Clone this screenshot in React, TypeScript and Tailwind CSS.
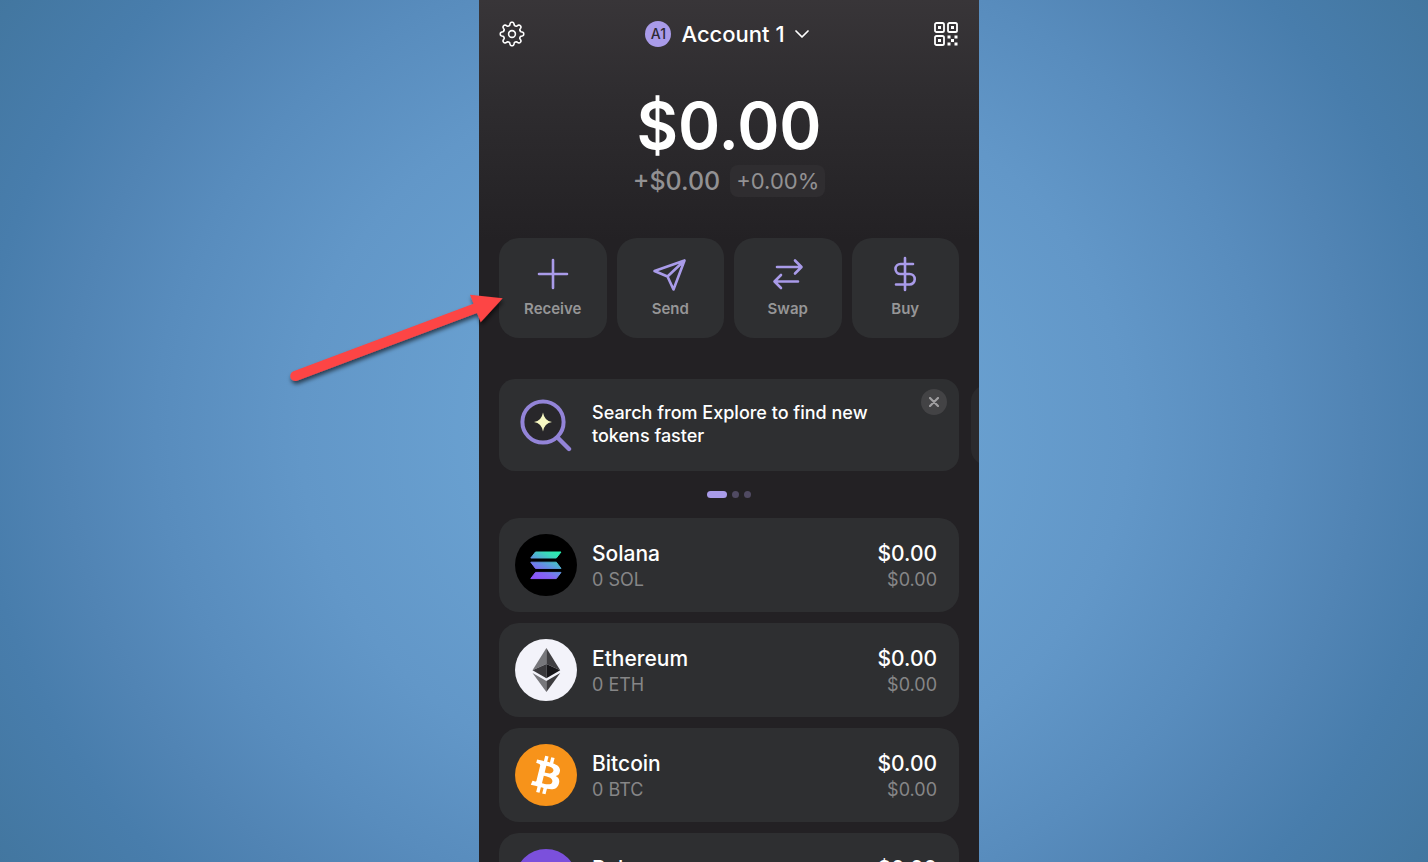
import { ReactNode } from "react";

interface Token {
  name: string;
  amount: string;
  value: string;
  change: string;
  logo: ReactNode;
}

interface Action {
  label: string;
  icon: ReactNode;
}

// Outline of the settings cog: eight rounded teeth around a circle
const getGearPath = (): string => {
  const points: string[] = [];
  for (let i = 0; i < 160; i++) {
    const angle = (i / 160) * Math.PI * 2;
    const radius = 10.2 + 1.6 * Math.tanh(1.8 * Math.cos(angle * 8));
    const x = 13 + radius * Math.sin(angle);
    const y = 13 - radius * Math.cos(angle);
    points.push(`${x.toFixed(2)} ${y.toFixed(2)}`);
  }
  return `M${points.join("L")}Z`;
};

const GearIcon = () => (
  <svg width="26" height="26" viewBox="0 0 26 26" fill="none" stroke="#fff" strokeWidth="1.6" strokeLinejoin="round">
    <path d={getGearPath()} />
    <circle cx="13" cy="13" r="3.4" />
  </svg>
);

const QrIcon = () => (
  <svg width="26" height="24" viewBox="-1 0 26 24" fill="none" stroke="#fff" strokeWidth="1.8">
    <rect x="1" y="1" width="9" height="9" rx="1.6" />
    <rect x="14" y="1" width="9" height="9" rx="1.6" />
    <rect x="1" y="14" width="9" height="9" rx="1.6" />
    <g fill="#fff" stroke="none">
      <rect x="4" y="4" width="3" height="3" />
      <rect x="17" y="4" width="3" height="3" />
      <rect x="4" y="17" width="3" height="3" />
      <rect x="13.5" y="13.5" width="3" height="3" />
      <rect x="20.5" y="13.5" width="3" height="3" />
      <rect x="17" y="17" width="3" height="3" />
      <rect x="13.5" y="20.5" width="3" height="3" />
      <rect x="20.5" y="20.5" width="3" height="3" />
    </g>
  </svg>
);

const ActionIcon = ({ children }: { children: ReactNode }) => (
  <svg
    width="36"
    height="36"
    viewBox="0 0 36 36"
    fill="none"
    stroke="#a99be9"
    strokeWidth="2.6"
    strokeLinecap="round"
    strokeLinejoin="round"
  >
    {children}
  </svg>
);

const SearchIcon = () => (
  <svg width="53" height="54" viewBox="0 0 53 54" fill="none">
    <circle cx="24" cy="23" r="20.6" fill="#28272a" stroke="#9384d8" strokeWidth="4" />
    <path d="M38.5 38.5L50 50" stroke="#9384d8" strokeWidth="4.4" strokeLinecap="round" />
    <path d="M24 13.5Q25.3 21.7 33 23Q25.3 24.3 24 32.5Q22.7 24.3 15 23Q22.7 21.7 24 13.5Z" fill="#f7f8c2" />
  </svg>
);

const SolanaLogo = () => (
  <svg width="62" height="62" viewBox="0 0 62 62">
    <defs>
      <linearGradient id="sol" x1="20" y1="48" x2="36" y2="15" gradientUnits="userSpaceOnUse">
        <stop offset="0" stopColor="#8f4dff" />
        <stop offset="0.3" stopColor="#8364f5" />
        <stop offset="0.55" stopColor="#5f96e0" />
        <stop offset="0.85" stopColor="#38dcb8" />
        <stop offset="1" stopColor="#27efb0" />
      </linearGradient>
    </defs>
    <circle cx="31" cy="31" r="31" fill="#000" />
    <g fill="url(#sol)" stroke="url(#sol)" strokeLinejoin="round">
      <path d="M20.5 18H46L41.3 24H15.8Z" />
      <path d="M15.8 28.2H41.3L46 34.4H20.5Z" />
      <path d="M20.5 38.4H46L41.3 44.6H15.8Z" />
    </g>
  </svg>
);

const EthereumLogo = () => (
  <svg width="62" height="62" viewBox="0 0 62 62">
    <circle cx="31" cy="31" r="31" fill="#f3f3fa" />
    <path d="M31.4 9L17.5 31.2L31.4 25Z" fill="#77777b" />
    <path d="M31.4 9V25L45.2 31.2Z" fill="#3f3e41" />
    <path d="M31.4 25L17.5 31.2L31.4 39.2Z" fill="#3a393c" />
    <path d="M31.4 25V39.2L45.2 31.2Z" fill="#161518" />
    <path d="M17.5 34L31.4 42V53Z" fill="#77777b" />
    <path d="M31.4 42L45.2 34L31.4 53Z" fill="#3d3c3f" />
  </svg>
);

const BitcoinLogo = () => (
  <svg width="62" height="62" viewBox="0 0 32 32">
    <circle cx="16" cy="16" r="16" fill="#f7931a" />
    <path
      fill="#fff"
      d="M23.189 14.02c.314-2.096-1.283-3.223-3.465-3.975l.708-2.84-1.728-.43-.69 2.765c-.454-.114-.92-.22-1.385-.326l.695-2.783L15.596 6l-.708 2.839c-.376-.086-.746-.17-1.104-.26l.002-.009-2.384-.595-.46 1.846s1.283.294 1.256.312c.7.175.826.638.805 1.006l-.806 3.235c.048.012.11.03.18.057l-.183-.045-1.13 4.532c-.086.212-.303.531-.793.41.018.025-1.256-.313-1.256-.313l-.858 1.978 2.25.561c.418.105.828.215 1.231.318l-.715 2.872 1.727.43.708-2.84c.472.127.93.245 1.378.357l-.706 2.828 1.728.43.715-2.866c2.948.558 5.164.333 6.097-2.333.752-2.146-.037-3.385-1.588-4.192 1.13-.26 1.98-1.003 2.207-2.538zm-3.95 5.538c-.533 2.147-4.148.986-5.32.695l.95-3.805c1.172.293 4.929.872 4.37 3.11zm.535-5.569c-.487 1.953-3.495.96-4.47.717l.86-3.45c.975.243 4.118.696 3.61 2.733z"
    />
  </svg>
);

const PolygonLogo = () => (
  <svg width="62" height="62" viewBox="0 0 62 62">
    <circle cx="31" cy="31" r="31" fill="#7b50dc" />
    <path
      d="M36 25L41 22L46 25V31L41 34L36 31L26 37L21 40L16 37V31L21 28L26 31"
      fill="none"
      stroke="#fff"
      strokeWidth="3.5"
      strokeLinejoin="round"
    />
  </svg>
);

const actions: Action[] = [
  {
    label: "Receive",
    icon: (
      <ActionIcon>
        <path d="M18 4V32M4 18H32" />
      </ActionIcon>
    ),
  },
  {
    label: "Send",
    icon: (
      <ActionIcon>
        <path d="M32.5 4.5L2.5 15L15.5 20.5L21.5 33.5ZM32.5 4.5L15.5 20.5" />
      </ActionIcon>
    ),
  },
  {
    label: "Swap",
    icon: (
      <ActionIcon>
        <path d="M7 11H31M25 4.5L31.5 11L25 17.5M28 25.5H5M11 19L4.5 25.5L11 32" />
      </ActionIcon>
    ),
  },
  {
    label: "Buy",
    icon: (
      <ActionIcon>
        <path d="M18 2V34M26 8H13.5A5 5 0 0 0 13.5 18H22.5A5 5 0 0 1 22.5 28.5H9" />
      </ActionIcon>
    ),
  },
];

const tokens: Token[] = [
  { name: "Solana", amount: "0 SOL", value: "$0.00", change: "$0.00", logo: <SolanaLogo /> },
  { name: "Ethereum", amount: "0 ETH", value: "$0.00", change: "$0.00", logo: <EthereumLogo /> },
  { name: "Bitcoin", amount: "0 BTC", value: "$0.00", change: "$0.00", logo: <BitcoinLogo /> },
  { name: "Polygon", amount: "0 MATIC", value: "$0.00", change: "$0.00", logo: <PolygonLogo /> },
];

const Header = () => (
  <header className="flex h-[68px] items-center justify-between px-5">
    <button type="button" aria-label="Settings">
      <GearIcon />
    </button>
    <button type="button" className="flex items-center gap-2.5 pr-1 text-[22px] font-medium">
      <span className="flex h-[26px] w-[26px] items-center justify-center rounded-full bg-[#a99be9] text-sm text-[#2c2935]">
        A1
      </span>
      <span>Account 1</span>
      <svg width="14" height="8" viewBox="0 0 14 8" fill="none" stroke="#fff" strokeWidth="1.7" strokeLinecap="round" strokeLinejoin="round">
        <path d="M1 1L7 7L13 1" />
      </svg>
    </button>
    <button type="button" aria-label="Scan QR code">
      <QrIcon />
    </button>
  </header>
);

const Balance = () => (
  <section className="mt-6 flex flex-col items-center">
    <h1 className="text-[64px] leading-[68px] font-semibold">$0.00</h1>
    <div className="mt-[5px] flex h-8 items-center gap-2.5 text-[#929193]">
      <span className="text-[25px] leading-8 font-medium">+$0.00</span>
      <span className="rounded-lg bg-[#2f2d30] px-1.5 text-[22px] leading-8">+0.00%</span>
    </div>
  </section>
);

const Promo = () => (
  <section>
    <div className="flex items-center gap-3 overflow-hidden pl-5">
      <div className="flex h-[92px] w-[460px] shrink-0 items-start rounded-2xl bg-[#2e2f31] pt-5 pr-3 pl-5">
        <SearchIcon />
        <p className="ml-5 flex-1 pt-0.5 pr-6 text-lg leading-[23px] font-medium">
          Search from Explore to find new tokens faster
        </p>
        <button
          type="button"
          aria-label="Dismiss"
          className="-mt-2.5 flex h-[26px] w-[26px] items-center justify-center rounded-full bg-[#434345]"
        >
          <svg width="10" height="10" viewBox="0 0 10 10" stroke="#a09fa1" strokeWidth="2.2" strokeLinecap="round">
            <path d="M1 1L9 9M9 1L1 9" />
          </svg>
        </button>
      </div>
      <div className="h-20 w-[460px] shrink-0 rounded-2xl bg-[#2b2a2d]" />
    </div>
    <div className="mt-5 flex items-center justify-center gap-[5px]">
      <span className="h-[7px] w-5 rounded-full bg-[#a99be9]" />
      <span className="h-[7px] w-[7px] rounded-full bg-[#504a62]" />
      <span className="h-[7px] w-[7px] rounded-full bg-[#504a62]" />
    </div>
  </section>
);

const TokenRow = ({ name, amount, value, change, logo }: Token) => (
  <li className="flex h-[94px] items-center gap-[15px] rounded-[20px] bg-[#2e2f31] pr-[22px] pl-4">
    {logo}
    <div className="flex-1 pt-1">
      <p className="text-[21px] leading-[26px] font-medium">{name}</p>
      <p className="text-lg leading-[26px] text-[#868687]">{amount}</p>
    </div>
    <div className="pt-1 text-right">
      <p className="text-[21px] leading-[26px] font-medium">{value}</p>
      <p className="text-lg leading-[26px] text-[#868687]">{change}</p>
    </div>
  </li>
);

const PointerArrow = () => (
  <svg
    className="pointer-events-none absolute top-[285px] -left-[199px] z-10"
    width="240"
    height="110"
    viewBox="280 285 240 110"
    fill="#fd4444"
    aria-hidden="true"
  >
    <defs>
      <filter id="arrow-shadow" x="-10%" y="-10%" width="120%" height="130%">
        <feDropShadow dx="1" dy="3" stdDeviation="2" floodColor="#000" floodOpacity="0.6" />
      </filter>
    </defs>
    <path
      filter="url(#arrow-shadow)"
      d="M293.5 371.3L473.5 303.7L470 294.7L502.7 298.2L480.7 322.3L477 313L297 380.7A5 5 0 0 1 293.5 371.3Z"
    />
  </svg>
);

export default function App() {
  return (
    <div className="flex h-screen justify-center overflow-hidden bg-[radial-gradient(ellipse_63%_92%_at_50%_50%,#6ba3d2_0%,#69a0d0_26%,#6297c8_46%,#588cbd_62%,#5184b4_72%,#487dac_82%,#42769f_97%)] pl-[30px] font-['Inter',sans-serif] text-white">
      <div className="relative w-full max-w-[500px]">
        <PointerArrow />
        <main className="h-full overflow-hidden bg-[#232124] bg-[linear-gradient(#383538_0px,#2f2d30_90px,#232124_240px)]">
          <Header />
          <Balance />
          <nav className="mt-[41px] grid grid-cols-4 gap-2.5 px-5">
            {actions.map((action) => (
              <button
                key={action.label}
                type="button"
                className="flex h-[100px] flex-col items-center rounded-[20px] bg-[#2e2f31] pt-[18px] text-[15px] font-semibold text-[#969697]"
              >
                {action.icon}
                <span className="mt-1.5">{action.label}</span>
              </button>
            ))}
          </nav>
          <div className="mt-[41px]">
            <Promo />
          </div>
          <ul className="mt-5 space-y-[11px] px-5">
            {tokens.map((token) => (
              <TokenRow key={token.name} {...token} />
            ))}
          </ul>
        </main>
      </div>
    </div>
  );
}
